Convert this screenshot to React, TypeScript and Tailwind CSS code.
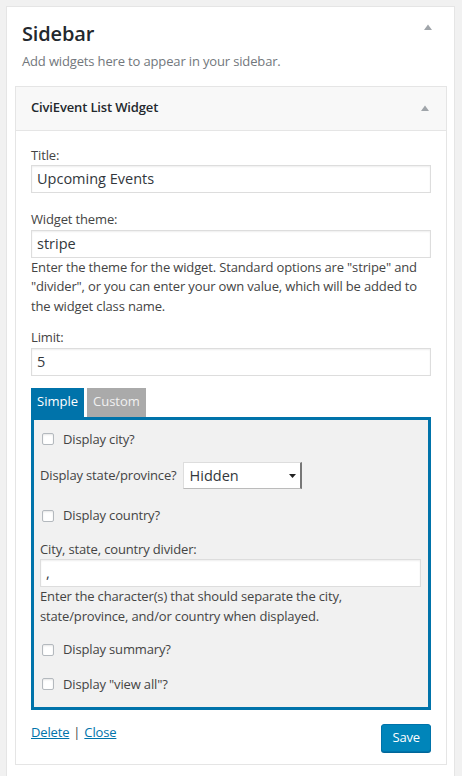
import React from 'react'

const font = { fontFamily: '"Open Sans", "Noto Sans", sans-serif' }

function Caret({ className }: { className?: string }) {
  return (
    <svg width="8" height="6" viewBox="0 0 8 6" className={className}>
      <polygon points="0,6 4,0.5 8,6" fill="#a0a5aa" />
    </svg>
  )
}

function Checkbox({ label }: { label: string }) {
  return (
    <label className="flex items-center h-[19.5px] pl-[2px]">
      <span className="w-[12px] h-[12px] border border-[#b4b9be] rounded-[2px] bg-white shadow-[inset_0_1px_2px_rgba(0,0,0,0.1)]" />
      <span className="ml-[9px]">{label}</span>
    </label>
  )
}

function TextInput({ value, className = '' }: { value: string; className?: string }) {
  return (
    <div
      className={`h-[28px] border border-[#ddd] bg-white shadow-[inset_0_1px_2px_rgba(0,0,0,0.07)] flex items-center px-[5px] text-[14.5px] tracking-normal text-[#32373c] ${className}`}
    >
      {value}
    </div>
  )
}

export default function App() {
  return (
    <div
      className="min-h-[776px] bg-[#f1f1f1] pt-[6px] pl-[6px] overflow-hidden text-[13px] leading-[19.5px] tracking-[-0.15px] text-[#444]"
      style={font}
    >
      <div className="w-[449px] min-h-[800px] bg-white border border-[#e5e5e5]">
        {/* Sidebar header */}
        <div className="flex justify-between pl-[15px] pr-[22px] pt-[14px]">
          <h2 className="text-[20px] leading-[26px] font-semibold text-[#23282d]">Sidebar</h2>
          <Caret className="mt-[3px]" />
        </div>
        <p className="pl-[15px] mt-[5px] text-[#72777c]">Add widgets here to appear in your sidebar.</p>

        {/* Widget */}
        <div className="ml-[8px] mt-[14px] w-[432px] border border-[#e5e5e5]">
          <div className="h-[44px] bg-[#f8f8f8] border-b border-[#e5e5e5] flex items-center justify-between pl-[15px] pr-[17px]">
            <span className="font-semibold text-[#23282d]">CiviEvent List Widget</span>
            <Caret />
          </div>

          <div className="px-[15px] pt-[15px] pb-[12px]">
            <div>Title:</div>
            <TextInput value="Upcoming Events" />

            <div className="mt-[17px]">Widget theme:</div>
            <TextInput value="stripe" />
            <p>
              Enter the theme for the widget. Standard options are "stripe" and "divider", or you can enter your own
              value, which will be added to the widget class name.
            </p>

            <div className="mt-[12px]">Limit:</div>
            <TextInput value="5" />

            {/* Tabs */}
            <div className="mt-[12px] flex gap-[3px] tracking-normal">
              <div className="h-[29px] px-[6px] flex items-center bg-[#0073aa] text-white">Simple</div>
              <div className="h-[29px] px-[6px] flex items-center bg-[#aaa] text-[#f1f1f1]">Custom</div>
            </div>
            <div className="border-[3px] border-[#0073aa] bg-[#f1f1f1] pl-[6px] pr-[7px] pt-[10px] pb-[13px]">
              <Checkbox label="Display city?" />

              <div className="mt-[13px] flex items-center">
                <span>Display state/province?</span>
                <div className="ml-[6px] w-[119px] h-[27px] bg-white border border-[#ddd] border-r-[2px] border-r-[#777] border-b-[#bbb] flex items-center justify-between pl-[6px] pr-[4px] text-[14.5px] tracking-normal text-[#32373c]">
                  <span>Hidden</span>
                  <svg width="7" height="4" viewBox="0 0 7 4">
                    <polygon points="0,0 7,0 3.5,4" fill="#222" />
                  </svg>
                </div>
              </div>

              <div className="mt-[17px]">
                <Checkbox label="Display country?" />
              </div>

              <div className="mt-[14px]">City, state, country divider:</div>
              <TextInput value="," />
              <p>Enter the character(s) that should separate the city, state/province, and/or country when displayed.</p>

              <div className="mt-[14px]">
                <Checkbox label="Display summary?" />
              </div>
              <div className="mt-[15px]">
                <Checkbox label='Display "view all"?' />
              </div>
            </div>

            {/* Footer */}
            <div className="mt-[13px] flex justify-between items-start">
              <div>
                <a className="text-[#0073aa] underline">Delete</a>
                <span className="mx-[4px]">|</span>
                <a className="text-[#0073aa] underline">Close</a>
              </div>
              <button className="mt-[1px] h-[28px] px-[10px] bg-[#0085ba] border border-[#0073aa] rounded-[3px] text-white shadow-[0_1px_0_#006799]">
                Save
              </button>
            </div>
          </div>
        </div>
      </div>
    </div>
  )
}
